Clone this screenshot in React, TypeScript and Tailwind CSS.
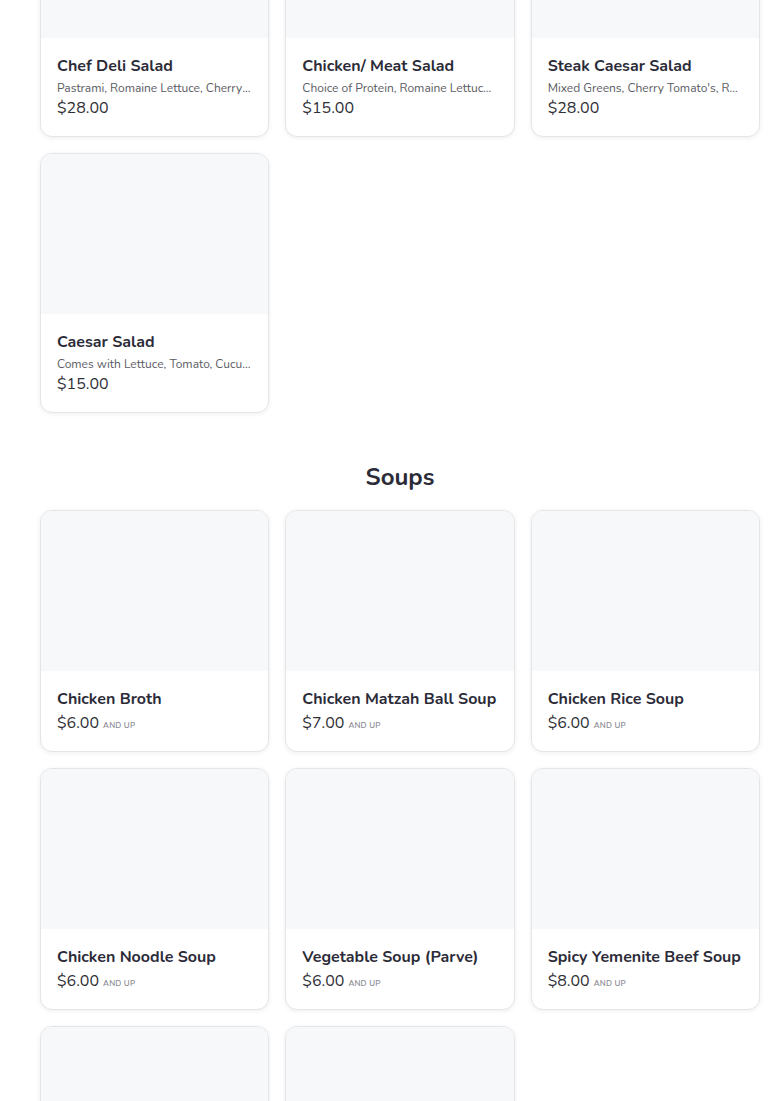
type Item = {
  name: string;
  price: string;
  description?: string;
  andUp?: boolean;
};

const salads: Item[] = [
  {
    name: "Chef Deli Salad",
    description: "Pastrami, Romaine Lettuce, Cherry Tomato, Cucumber, Red Onion",
    price: "$28.00",
  },
  {
    name: "Chicken/ Meat Salad",
    description: "Choice of Protein, Romaine Lettuce, Cherry Tomato, Cucumber",
    price: "$15.00",
  },
  {
    name: "Steak Caesar Salad",
    description: "Mixed Greens, Cherry Tomato's, Red Onion, Croutons",
    price: "$28.00",
  },
  {
    name: "Caesar Salad",
    description: "Comes with Lettuce, Tomato, Cucumber, Croutons",
    price: "$15.00",
  },
];

const soups: Item[] = [
  { name: "Chicken Broth", price: "$6.00", andUp: true },
  { name: "Chicken Matzah Ball Soup", price: "$7.00", andUp: true },
  { name: "Chicken Rice Soup", price: "$6.00", andUp: true },
  { name: "Chicken Noodle Soup", price: "$6.00", andUp: true },
  { name: "Vegetable Soup (Parve)", price: "$6.00", andUp: true },
  { name: "Spicy Yemenite Beef Soup", price: "$8.00", andUp: true },
  { name: "Split Pea Soup", price: "$6.00", andUp: true },
  { name: "Mushroom Barley Soup", price: "$6.00", andUp: true },
];

function MenuCard({ item }: { item: Item }) {
  return (
    <div className="bg-white border border-[#e4e5e9] rounded-xl overflow-hidden shadow-[0_1px_5px_rgba(0,0,0,0.07)]">
      <div className="h-40 bg-[#f7f8fa]" />
      <div className="p-4">
        <p className="text-base leading-6 font-bold text-[#2c2b38] truncate">
          {item.name}
        </p>
        {item.description && (
          <p className="mt-0.5 text-xs leading-4 text-[#5b5b63] truncate">
            {item.description}
          </p>
        )}
        <div className="flex items-baseline">
          <span className="text-base leading-6 text-[#2f2f36]">
            {item.price}
          </span>
          {item.andUp && (
            <span className="ml-1 text-[8px] font-semibold uppercase tracking-wide text-[#8a8a92]">
              and up
            </span>
          )}
        </div>
      </div>
    </div>
  );
}

export default function App() {
  return (
    <div
      className="min-h-[1101px] bg-white pl-10 pr-5 overflow-hidden"
      style={{ fontFamily: '"Nunito", "Lato", "Noto Sans", sans-serif' }}
    >
      {/* Salads (scrolled partly out of view) */}
      <div className="-mt-[123px] grid grid-cols-3 gap-4">
        {salads.map((item) => (
          <MenuCard key={item.name} item={item} />
        ))}
      </div>

      {/* Soups */}
      <h2 className="mt-12 mb-[17px] text-center text-2xl leading-8 font-bold text-[#2c2b38]">
        Soups
      </h2>
      <div className="grid grid-cols-3 gap-4">
        {soups.map((item) => (
          <MenuCard key={item.name} item={item} />
        ))}
      </div>
    </div>
  );
}
